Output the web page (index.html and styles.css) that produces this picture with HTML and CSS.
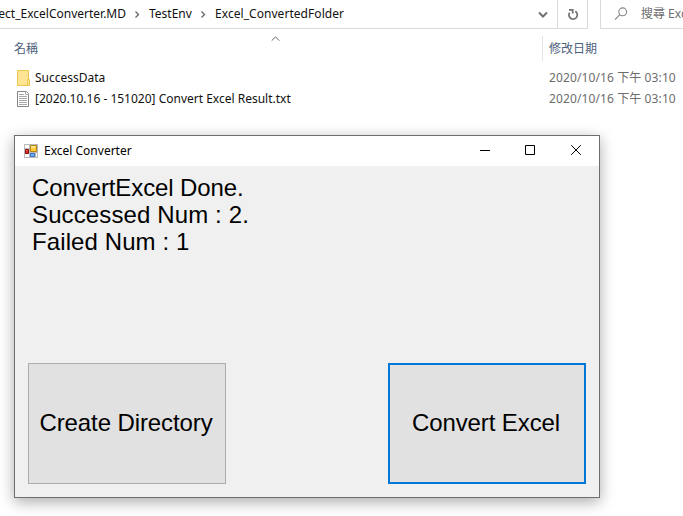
FILE: index.html
```
<!DOCTYPE html>
<html lang="zh-Hant">
<head>
<meta charset="utf-8">
<title>Excel Converter</title>
<link rel="stylesheet" href="styles.css">
</head>
<body>
<main class="explorer">
  <header class="toolbar">
    <nav class="address">
      <span class="crumb crumb-first">ect_ExcelConverter.MD</span>
      <svg class="sep" width="23" height="9" viewBox="0 0 23 9"><path d="M9.500 1.500l3 3-3 3"/></svg>
      <span class="crumb crumb-env">TestEnv</span>
      <svg class="sep" width="23" height="9" viewBox="0 0 23 9"><path d="M9.500 1.500l3 3-3 3"/></svg>
      <span class="crumb crumb-folder">Excel_ConvertedFolder</span>
      <svg class="drop" width="10" height="8" viewBox="0 0 10 8"><path d="M1 1.500l4 4 4-4"/></svg>
    </nav>
    <div class="refresh">
      <svg width="12" height="13" viewBox="0 0 12 13"><path d="M8.300 3.300A4.200 4.200 0 1 1 2.600 4.600M2 1.900h3.700v3.600"/></svg>
    </div>
    <div class="search">
      <svg width="14" height="14" viewBox="0 0 14 14"><circle cx="8.700" cy="4.800" r="3.900"/><path d="M5.800 7.700L1 12.700"/></svg>
      <span>搜尋 Exc</span>
    </div>
  </header>
  <div class="columns">
    <div class="col-name"><span>名稱</span>
      <svg class="sort" width="9" height="6" viewBox="0 0 9 6"><path d="M.7 4.700l3.800-3.800 3.800 3.800"/></svg>
    </div>
    <div class="col-date">修改日期</div>
  </div>
  <div class="row">
    <svg class="file-icon" width="14" height="16" viewBox="0 0 14 16"><path d="M.5.5h11v9h1v6H.5z" fill="#ffe494" stroke="#ecc64d"/><path d="M10.500 15V9.500h1" fill="none" stroke="#ecc64d"/></svg>
    <span class="file-name">SuccessData</span>
    <span class="file-date">2020/10/16 下午 03:10</span>
  </div>
  <div class="row">
    <svg class="file-icon" width="14" height="16" viewBox="0 0 14 16"><path d="M.5.5h9l2 2v13H.5z" fill="#fff" stroke="#858585"/><path d="M8.500.5v3h3M2 3.500h5M2 5.500h8M2 7.500h8M2 9.500h8M2 11.500h8M2 13.500h8" fill="none" stroke="#a8a8a8"/></svg>
    <span class="file-name">[2020.10.16 - 151020] Convert Excel Result.txt</span>
    <span class="file-date">2020/10/16 下午 03:10</span>
  </div>
</main>
<section class="window">
  <header class="titlebar">
    <svg class="app-icon" width="14" height="14" viewBox="0 0 14 14">
      <path d="M0 0h14v14H0z" fill="#b9b9b9"/>
      <path d="M1 1h4v3H1zM1 10h4v3H1zM12 9h1v4h-1z" fill="#fff"/>
      <path d="M6.500 1.500h6v6h-6z" fill="#ffcd3c" stroke="#b88713"/><path d="M7 2h4v2H7z" fill="#ffe695"/>
      <path d="M1.500 5.500h3v4h-3z" fill="#d32b20" stroke="#97120f"/><path d="M2 6h1v1H2z" fill="#f39a8d"/>
      <path d="M6.500 9.500h4v3h-4z" fill="#79aef4" stroke="#3b74d0"/>
    </svg>
    <span class="title">Excel Converter</span>
    <svg class="control" width="46" height="30" viewBox="0 0 46 30"><path d="M19 14.500h10"/></svg>
    <svg class="control" width="46" height="30" viewBox="0 0 46 30"><path d="M18.500 9.500h9v9h-9z"/></svg>
    <svg class="control" width="46" height="30" viewBox="0 0 46 30"><path d="M18.200 9.200l9.600 9.600M27.800 9.200l-9.600 9.600"/></svg>
  </header>
  <div class="client">
    <div class="status">
      <div class="line-done">ConvertExcel Done.</div>
      <div class="line-success">Successed Num : 2.</div>
      <div class="line-failed">Failed Num : 1</div>
    </div>
    <div class="actions">
      <button class="action">Create Directory</button>
      <button class="action action-default">Convert Excel</button>
    </div>
  </div>
</section>
</body>
</html>
```
FILE: styles.css
```
* { box-sizing: border-box; }
body {
  margin: 0;
  width: 683px;
  height: 516px;
  overflow: hidden;
  position: relative;
  background: #fff;
  color: #111;
  font: 12px/18px "Noto Sans", "Noto Sans CJK TC", sans-serif;
}
svg { display: block; flex: none; }
span { white-space: nowrap; }
.toolbar { display: flex; height: 29px; }
.address {
  display: flex;
  align-items: center;
  width: 557px;
  border-bottom: 1px solid #d9d9d9;
}
.crumb { flex: none; }
.crumb-first { width: 126px; display: flex; justify-content: flex-end; }
.crumb-env { width: 43px; }
.crumb-folder { letter-spacing: .05px; }
.sep { fill: none; stroke: #666; stroke-width: 1.3; }
.drop { margin: 2px 9px 0 auto; fill: none; stroke: #707070; stroke-width: 2; }
.refresh {
  display: flex;
  align-items: center;
  justify-content: center;
  width: 31px;
  border: solid #d9d9d9;
  border-width: 0 1px 1px;
}
.refresh svg { fill: none; stroke: #707070; stroke-width: 1.7; }
.search {
  display: flex;
  align-items: center;
  flex: 1;
  min-width: 0;
  overflow: hidden;
  margin-left: 12px;
  padding-left: 13px;
  border: solid #d9d9d9;
  border-width: 0 0 1px 1px;
  color: #6d6d6d;
}
.search svg { margin-right: 13px; fill: none; stroke: #858585; stroke-width: 1.1; }
.columns {
  display: flex;
  height: 25px;
  margin: 7px 0 6px;
  line-height: 25px;
  color: #4c607a;
}
.col-name { position: relative; width: 542px; padding-left: 14px; }
.sort { position: absolute; left: 271px; top: 0; fill: none; stroke: #666; }
.col-date { padding-left: 6px; border-left: 1px solid #e5e5e5; }
.row { display: flex; align-items: center; height: 21px; }
.file-icon { margin: 0 4px 0 17px; }
.file-name { width: 514px; }
.file-date { color: #6d6d6d; letter-spacing: .11px; }
.window {
  position: absolute;
  left: 14px;
  top: 135px;
  width: 586px;
  height: 363px;
  border: 1px solid #6e6e6e;
  background: #f0f0f0;
  box-shadow: 0 4px 14px rgba(0, 0, 0, .33);
}
.titlebar { display: flex; align-items: center; height: 30px; background: #fff; color: #000; }
.app-icon { margin: 0 6px 0 9px; }
.title { margin-right: auto; }
.control { fill: none; stroke: #000; }
.client {
  display: flex;
  flex-direction: column;
  justify-content: space-between;
  height: 331px;
  padding: 8px 13px 13px;
  font: 24px/27px "Liberation Sans", Arial, sans-serif;
  color: #000;
}
.status { padding-left: 4px; }
.line-done { letter-spacing: -.1px; }
.line-success { letter-spacing: .12px; }
.line-failed { letter-spacing: .1px; }
.actions { display: flex; justify-content: space-between; }
.action {
  width: 198px;
  height: 121px;
  padding: 0 2px 2px 0;
  border: 1px solid #adadad;
  border-radius: 0;
  background: #e1e1e1;
  color: #000;
  font: inherit;
  letter-spacing: -.1px;
  white-space: nowrap;
}
.action-default { border: 2px solid #0078d7; }
```
